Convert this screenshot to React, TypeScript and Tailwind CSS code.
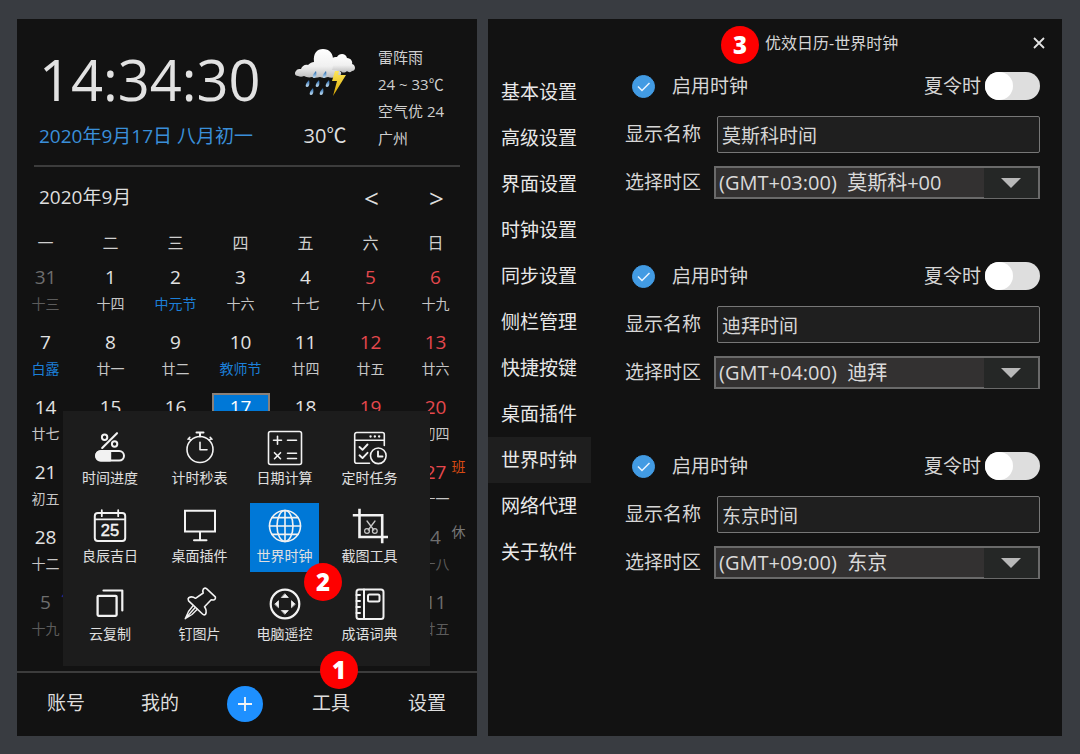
import React, { useState } from "react";

const weekdays = ["一", "二", "三", "四", "五", "六", "日"];

type Day = {
  n?: number;
  lunar?: string;
  out?: boolean;
  festival?: boolean;
  today?: boolean;
  mark?: string;
  markClass?: string;
};

// Days that lie under the open tools menu are left blank.
const weeks: Day[][] = [
  [
    { n: 31, lunar: "十三", out: true },
    { n: 1, lunar: "十四" },
    { n: 2, lunar: "中元节", festival: true },
    { n: 3, lunar: "十六" },
    { n: 4, lunar: "十七" },
    { n: 5, lunar: "十八" },
    { n: 6, lunar: "十九" },
  ],
  [
    { n: 7, lunar: "白露", festival: true },
    { n: 8, lunar: "廿一" },
    { n: 9, lunar: "廿二" },
    { n: 10, lunar: "教师节", festival: true },
    { n: 11, lunar: "廿四" },
    { n: 12, lunar: "廿五" },
    { n: 13, lunar: "廿六" },
  ],
  [
    { n: 14, lunar: "廿七" },
    { n: 15 },
    { n: 16 },
    { n: 17, today: true },
    { n: 18 },
    { n: 19 },
    { n: 20, lunar: "初四" },
  ],
  [
    { n: 21, lunar: "初五" },
    {},
    {},
    {},
    {},
    {},
    { n: 27, lunar: "十一", mark: "班", markClass: "text-[#d84a12]" },
  ],
  [
    { n: 28, lunar: "十二" },
    {},
    {},
    {},
    {},
    {},
    { n: 4, lunar: "十八", out: true, mark: "休", markClass: "text-[#777777]" },
  ],
  [
    { n: 5, lunar: "十九", out: true, mark: "休", markClass: "text-[#2a2a9c]" },
    {},
    {},
    {},
    {},
    {},
    { n: 11, lunar: "廿五", out: true },
  ],
];

function numberColor(d: Day, col: number) {
  if (d.today) return "text-white";
  if (d.out) return "text-[#6e6e6e]";
  return col > 4 ? "text-[#e5484d]" : "text-[#e2e2e2]";
}

function lunarColor(d: Day) {
  if (d.out) return "text-[#5c5c5c]";
  return d.festival ? "text-[#1c7fd8]" : "text-[#c6c6c6]";
}

function Icon({ children }: { children: React.ReactNode }) {
  return (
    <svg
      viewBox="0 0 36 36"
      className="h-9 w-9"
      fill="none"
      stroke="#f2f2f2"
      strokeWidth="1.6"
      strokeLinecap="round"
      strokeLinejoin="round"
      aria-hidden="true"
    >
      {children}
    </svg>
  );
}

const tools = [
  {
    name: "时间进度",
    icon: (
      <Icon>
        <circle cx="12.6" cy="7.2" r="2.7" strokeWidth="2" />
        <circle cx="22.6" cy="14" r="2.7" strokeWidth="2" />
        <path d="M25 3.2L10.2 18" strokeWidth="2.1" />
        <rect x="4" y="21" width="28" height="9.6" rx="4.8" strokeWidth="2" />
        <path d="M18.4 21H8.8a4.8 4.8 0 0 0 0 9.6h9.600z" fill="#f2f2f2" />
      </Icon>
    ),
  },
  {
    name: "计时秒表",
    icon: (
      <Icon>
        <circle cx="18" cy="19.5" r="13" />
        <path d="M18 2.5v4M14.5 2.5h7" strokeWidth="2" />
        <path d="M27.2 10.3l2-2M8.8 10.3l-2-2M6 9.2l1.8-1.8M30 9.2l-1.8-1.8" />
        <path d="M18 12.3v7.5h7" />
      </Icon>
    ),
  },
  {
    name: "日期计算",
    icon: (
      <Icon>
        <rect x="1.5" y="1.5" width="33" height="33" rx="2" />
        <path d="M6.5 10.3h8M10.5 6.3v8M20.5 10.3h9M7.5 22.7l6 6M13.5 22.7l-6 6M20.5 23.3h9M20.5 28.5h9" />
      </Icon>
    ),
  },
  {
    name: "定时任务",
    icon: (
      <Icon>
        <path d="M17.500 33.200H4.700a2 2 0 0 1-2-2V4.500a2 2 0 0 1 2-2h25.600a2 2 0 0 1 2 2V15.500M3 10.300h29" />
        <path d="M18.500 6.500h.1M22.800 6.500h.1M27.100 6.500h.1" strokeWidth="2.3" />
        <path d="M7.500 17l3 2.800 5-5.300M7.500 25.300l3 2.800 5-5.300" strokeWidth="1.9" />
        <circle cx="26.300" cy="25.800" r="7.800" />
        <path d="M26 21.500v5h4.500" strokeWidth="1.9" />
      </Icon>
    ),
  },
  {
    name: "良辰吉日",
    icon: (
      <Icon>
        <rect x="2.800" y="5" width="30.400" height="28" rx="3" strokeWidth="2" />
        <path d="M3 11.400h30M9.800 2.200v6M26.200 2.200v6" strokeWidth="1.8" />
        <text
          x="18"
          y="27.8"
          textAnchor="middle"
          fontSize="16.5"
          fontFamily="Liberation Sans, sans-serif"
          stroke="#f2f2f2"
          strokeWidth="0.5"
          fill="#f2f2f2"
        >
          25
        </text>
      </Icon>
    ),
  },
  {
    name: "桌面插件",
    icon: (
      <Icon>
        <path d="M3 2.800h30v20.600H3zM18 23.400v8.400M12 32.200h12.500" strokeWidth="2" strokeLinejoin="miter" />
      </Icon>
    ),
  },
  {
    name: "世界时钟",
    active: true,
    icon: (
      <Icon>
        <circle cx="18" cy="18" r="15.5" />
        <ellipse cx="18" cy="18" rx="8" ry="15.5" />
        <path d="M18 2.500v31M2.500 18h31M5 9.600h26M5 26.400h26" />
      </Icon>
    ),
  },
  {
    name: "截图工具",
    icon: (
      <Icon>
        <path d="M7.500 0.800V29H36M0.800 7.200h29.400v28" strokeWidth="2.6" strokeLinecap="butt" strokeLinejoin="miter" />
        <path d="M15 13l6.800 9M23 13l-6.800 9" strokeWidth="1.3" stroke="#c8c8c8" />
        <circle cx="15" cy="23" r="2.4" strokeWidth="1.2" stroke="#c8c8c8" />
        <circle cx="22.8" cy="23" r="2.4" strokeWidth="1.2" stroke="#c8c8c8" />
      </Icon>
    ),
  },
  {
    name: "云复制",
    icon: (
      <Icon>
        <rect x="5.600" y="9.800" width="19" height="20" rx="1" strokeWidth="2.3" />
        <path d="M11.500 4.500H30.300V24.500" strokeWidth="2.2" />
      </Icon>
    ),
  },
  {
    name: "钉图片",
    icon: (
      <Icon>
        <path
          d="M24.500 2.600L33.300 10.800Q34 13.400 31.500 14L29.200 13.700L22.500 20.700Q25.300 24.500 23.500 28.300Q22 29.500 20.500 28L6.600 14.800Q5.500 12.900 6.800 11.700Q10 9.900 13.500 12.300L21.200 7Q20.300 4.500 21.500 2.800Q23 1.500 24.500 2.600Z"
          strokeWidth="1.6"
        />
        <path d="M11.200 19.500L6.500 25.500L3.200 32.700L10 28.500L15.300 23.300M3.200 32.700L13.200 21.500" strokeWidth="1.4" />
      </Icon>
    ),
  },
  {
    name: "电脑遥控",
    icon: (
      <Icon>
        <circle cx="18" cy="18" r="14.3" strokeWidth="2.2" />
        <path
          d="M18 8l3.300 3.500h-6.600zM18 28l3.300-3.500h-6.600zM8 18l3.500-3.300v6.600zM28 18l-3.500-3.300v6.600z"
          fill="#f2f2f2"
          strokeWidth="0.8"
        />
      </Icon>
    ),
  },
  {
    name: "成语词典",
    icon: (
      <Icon>
        <rect x="4.500" y="3.500" width="27" height="29.500" rx="2.5" strokeWidth="2" />
        <path d="M12 3.500V33M4.500 9h3.500M4.500 15h3.500M4.500 21h3.500M4.500 27h3.500" strokeWidth="2" />
        <rect x="16" y="8.500" width="11.500" height="7" rx="1.5" strokeWidth="2" />
      </Icon>
    ),
  },
];

function Badge({ n, className }: { n: number; className: string }) {
  return (
    <span
      className={`absolute z-20 flex size-[38px] items-center justify-center rounded-full bg-[#fe0000] text-[24px] font-extrabold text-white ${className}`}
    >
      {n}
    </span>
  );
}

function StormIcon() {
  return (
    <svg viewBox="0 0 62 50" className="h-[50px] w-[62px]" role="img" aria-label="雷阵雨">
      <defs>
        <linearGradient id="cloud" x1="0" y1="0" x2="0" y2="1">
          <stop offset="0" stopColor="#ffffff" />
          <stop offset="0.6" stopColor="#f0f0f0" />
          <stop offset="1" stopColor="#bdbdbd" />
        </linearGradient>
        <linearGradient id="drop" x1="0" y1="0" x2="0" y2="1">
          <stop offset="0" stopColor="#1c5fa5" />
          <stop offset="1" stopColor="#c9e6fb" />
        </linearGradient>
        <linearGradient id="bolt" x1="0" y1="0" x2="0" y2="1">
          <stop offset="0" stopColor="#ffe75a" />
          <stop offset="1" stopColor="#d9a800" />
        </linearGradient>
      </defs>
      <path
        d="M36 21c-2-6 1-13 7-12 2-4 9-4 10 1 4 0 6 4 5 6 4 1 4 7 0 7-2 2-4 1-5 0-2 2-5 2-6 0-3 2-8 2-11-2z"
        fill="url(#cloud)"
      />
      <path
        d="M4 28c-3 0-4-3-2-5 1-2 3-2 5-2 1-3 4-5 7-4 2-2 4-3 6-3C19 5 23 1 29 1s11 4 10 13c0 3 0 6-1 8 4 0 8 1 9 2 1 3-2 5-5 5-3 1-6 1-8 0-3 1-6 1-8 0-3 1-6 1-8 0-3 1-6 0-8-1-2 1-4 1-6 0z"
        fill="url(#cloud)"
      />
      <path d="M41 23h4l-1 4h8L39 48l4-15h-5z" fill="url(#bolt)" />
      <g fill="url(#drop)">
        <path d="M22 23c1 4 0 7-2 7s-2-3 2-7z" />
        <path d="M32 23c1 4 0 7-2 7s-2-3 2-7z" />
        <path d="M15 32c1 4 0 7-2 7s-2-3 2-7z" />
        <path d="M25 32c1 4 0 7-2 7s-2-3 2-7z" />
        <path d="M35 32c1 4 0 7-2 7s-2-3 2-7z" />
        <path d="M19 40c1 4 0 7-2 7s-2-3 2-7z" />
        <path d="M29 40c1 4 0 7-2 7s-2-3 2-7z" />
      </g>
    </svg>
  );
}

function CalendarPanel() {
  return (
    <section className="relative flex flex-col bg-[#121212]">
      <header className="mx-[17px] flex border-b-2 border-[#3c3c3c] pt-[25px]">
        <div className="flex-1 pb-[7px] pl-[5px]">
          <div className="text-[56px] leading-[70px] whitespace-nowrap text-[#e2e2e2]">14:34:30</div>
          <div className="text-[19px] leading-[44px] whitespace-nowrap text-[#3a8fd9]">2020年9月17日 八月初一</div>
        </div>
        <div className="flex w-[66px] flex-col items-center pt-[4px]">
          <StormIcon />
          <span className="mt-[20px] text-[20px] leading-[36px]">30℃</span>
        </div>
        <ul className="ml-[20px] w-[82px] text-[15px] leading-[27px] whitespace-nowrap text-[#cfcfcf]">
          <li>雷阵雨</li>
          <li>24 ~ 33℃</li>
          <li>空气优 24</li>
          <li>广州</li>
        </ul>
      </header>

      <div className="flex h-[58px] items-center pt-[3px] pr-[8px] pl-[22px]">
        <h2 className="flex-1 text-[19px]">2020年9月</h2>
        <button type="button" aria-label="上个月" className="w-[65px] text-[26px] leading-[30px] font-medium">
          &lt;
        </button>
        <button type="button" aria-label="下个月" className="w-[65px] text-[26px] leading-[30px] font-medium">
          &gt;
        </button>
      </div>

      <div className="-ml-[4px] pr-[9px]">
        <table className="w-full table-fixed border-collapse text-center">
          <thead>
            <tr className="h-[36px]">
              {weekdays.map((w) => (
                <th key={w} scope="col" className="p-0 text-[16px] font-normal text-[#cfcfcf]">
                  {w}
                </th>
              ))}
            </tr>
          </thead>
          <tbody>
            {weeks.map((week, r) => (
              <tr key={r} className="h-[65px]">
                {week.map((d, c) => (
                  <td key={c} className="p-0 pt-[2px] align-top">
                    <div
                      className={
                        d.today
                          ? "relative mx-auto h-[60px] w-[58px] border-2 border-[#8a8078] bg-[#0078d7]"
                          : "relative mx-auto h-[60px] w-[58px] border-2 border-transparent"
                      }
                    >
                      <div className={`text-[19px] leading-[24px] font-medium ${numberColor(d, c)}`}>{d.n}</div>
                      <div className={`text-[14px] leading-[30px] ${lunarColor(d)}`}>{d.lunar}</div>
                      {d.mark && (
                        <span className={`absolute -top-[3px] left-[43px] text-[14px] leading-[20px] ${d.markClass}`}>
                          {d.mark}
                        </span>
                      )}
                    </div>
                  </td>
                ))}
              </tr>
            ))}
          </tbody>
        </table>
      </div>

      <div className="absolute right-[47px] bottom-[70px] left-[46px] grid grid-cols-[94fr_85fr_85fr_85fr] justify-items-center gap-y-[9px] bg-[#1c1c1c] pt-[14px] pr-[18px] pb-[16px]">
        {tools.map((t) => (
          <div key={t.name} className="relative">
            <button
              type="button"
              className={`flex size-[69px] flex-col items-center pt-[5px] ${t.active ? "bg-[#0078d7]" : ""}`}
            >
              {t.icon}
              <span className="text-[14px] leading-[24px] whitespace-nowrap text-[#e0e0e0]">{t.name}</span>
            </button>
            {t.active && <Badge n={2} className="top-[60px] left-[54px]" />}
          </div>
        ))}
      </div>

      <nav className="mt-auto grid h-[65px] grid-cols-[98fr_90fr_80fr_92fr_100fr] items-center justify-items-center border-t-2 border-[#3c3c3c] pb-[2px] text-[19px]">
        <button type="button">账号</button>
        <button type="button">我的</button>
        <button
          type="button"
          aria-label="新建"
          className="flex size-[36px] items-center justify-center rounded-full bg-[#1e90ff]"
        >
          <svg viewBox="0 0 16 16" className="size-4" stroke="#f4f4f4" strokeWidth="1.8" aria-hidden="true">
            <path d="M8 1v14M1 8h14" />
          </svg>
        </button>
        <div className="relative">
          <button type="button">工具</button>
          <Badge n={1} className="-top-[38px] left-[8px]" />
        </div>
        <button type="button">设置</button>
      </nav>
    </section>
  );
}

const sections = [
  "基本设置",
  "高级设置",
  "界面设置",
  "时钟设置",
  "同步设置",
  "侧栏管理",
  "快捷按键",
  "桌面插件",
  "世界时钟",
  "网络代理",
  "关于软件",
];

const clocks = [
  { id: "moscow", name: "莫斯科时间", zone: "(GMT+03:00)\u00a0\u00a0莫斯科+00" },
  { id: "dubai", name: "迪拜时间", zone: "(GMT+04:00)\u00a0\u00a0迪拜" },
  { id: "tokyo", name: "东京时间", zone: "(GMT+09:00)\u00a0\u00a0东京" },
];

function ClockForm({ id, name, zone }: { id: string; name: string; zone: string }) {
  const [enabled, setEnabled] = useState(true);
  const [dst, setDst] = useState(false);
  const [label, setLabel] = useState(name);
  return (
    <div>
      <div className="flex h-[36px] items-center">
        <label className="flex flex-1 items-center gap-[17px] pl-[7px]">
          <span className="grid size-[23px] place-items-center">
            <input
              type="checkbox"
              checked={enabled}
              onChange={(e) => setEnabled(e.target.checked)}
              className="size-[23px] appearance-none rounded-full border border-[#429be3] [grid-area:1/1] checked:bg-[#429be3]"
            />
            <svg
              viewBox="0 0 23 23"
              className="pointer-events-none size-[23px] [grid-area:1/1]"
              fill="none"
              stroke="#e8f4ff"
              strokeWidth="1.5"
              aria-hidden="true"
            >
              <path d="M6 11.500l4 4 7.500-7.500" />
            </svg>
          </span>
          启用时钟
        </label>
        <label className="flex items-center gap-[4px]">
          夏令时
          <input
            type="checkbox"
            role="switch"
            checked={dst}
            onChange={(e) => setDst(e.target.checked)}
            className="h-[28px] w-[55px] appearance-none rounded-full bg-[#dedede] before:block before:size-[28px] before:rounded-full before:bg-white checked:bg-[#429be3] checked:before:ml-auto"
          />
        </label>
      </div>
      <div className="mt-[12px] flex items-center">
        <label htmlFor={`${id}-name`} className="w-[92px]">
          显示名称
        </label>
        <input
          id={`${id}-name`}
          value={label}
          onChange={(e) => setLabel(e.target.value)}
          className="h-[37px] min-w-0 flex-1 rounded-[2px] border border-[#777777] bg-[#1f1f1f] px-[4px] text-[#d6d6d6] outline-none"
        />
      </div>
      <div className="mt-[13px] flex items-center">
        <label htmlFor={`${id}-zone`} className="w-[89px]">
          选择时区
        </label>
        <div className="grid h-[33px] min-w-0 flex-1 border-2 border-[#6a6a6a] bg-[#333131]">
          <select
            id={`${id}-zone`}
            className="w-full appearance-none bg-transparent pl-[3px] text-[20px] text-[#dadada] outline-none [grid-area:1/1]"
          >
            <option>{zone}</option>
          </select>
          <span className="pointer-events-none flex w-[54px] items-center justify-center justify-self-end bg-[#252726] [grid-area:1/1]">
            <svg viewBox="0 0 20 10" className="h-[10px] w-[20px]" fill="#b8b8b8" aria-hidden="true">
              <path d="M0 0h20L10 10z" />
            </svg>
          </span>
        </div>
      </div>
    </div>
  );
}

function SettingsPanel() {
  return (
    <section className="bg-[#121212]">
      <header className="relative flex h-[49px] items-center pr-[12px] pb-[2px] pl-[277px]">
        <Badge n={3} className="top-[7px] left-[233px]" />
        <h1 className="flex-1 text-[16px] whitespace-nowrap text-[#d6d6d6]">优效日历-世界时钟</h1>
        <button type="button" aria-label="关闭" className="flex size-[22px] items-center justify-center">
          <svg viewBox="0 0 12 12" className="size-3" stroke="#e2e2e2" strokeWidth="1.8" aria-hidden="true">
            <path d="M1 1l10 10M11 1L1 11" />
          </svg>
        </button>
      </header>
      <div className="flex">
        <nav className="w-[103px] pt-[1px] text-[19px]">
          {sections.map((s) => (
            <a
              key={s}
              href="#"
              className={`block pl-[13px] leading-[46px] whitespace-nowrap text-[#e8e8e8] ${s === "世界时钟" ? "bg-[#1e1e1e]" : ""}`}
            >
              {s}
            </a>
          ))}
        </nav>
        <main className="flex min-w-0 flex-1 flex-col gap-[59px] pr-[22px] pl-[34px] text-[19px] text-[#d6d6d6]">
          {clocks.map((c) => (
            <ClockForm key={c.id} id={c.id} name={c.name} zone={c.zone} />
          ))}
        </main>
      </div>
    </section>
  );
}

export default function App() {
  return (
    <div className="grid min-h-screen grid-cols-[460fr_574fr] gap-[11px] bg-[#393c41] pt-[19px] pr-[18px] pb-[18px] pl-[17px] font-['Open_Sans','Noto_Sans_CJK_SC',sans-serif] text-[#dedede]">
      <CalendarPanel />
      <SettingsPanel />
    </div>
  );
}
